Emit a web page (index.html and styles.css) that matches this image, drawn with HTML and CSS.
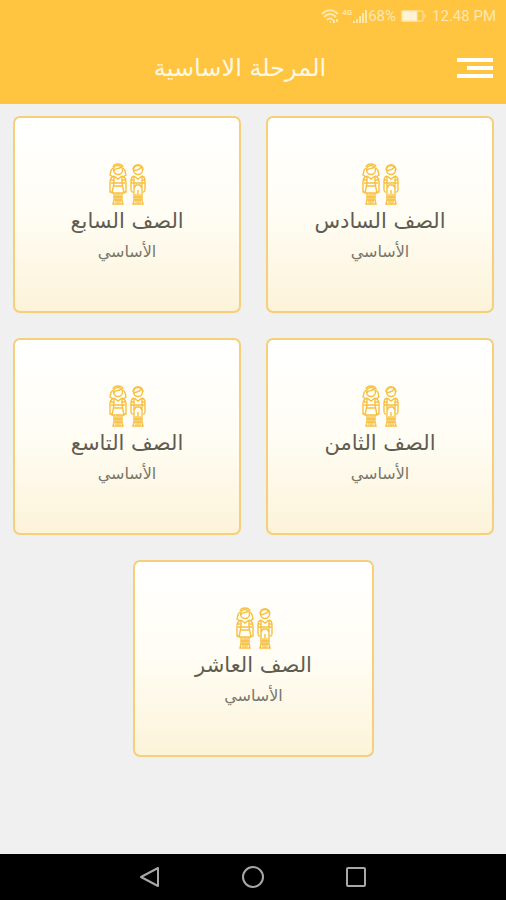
FILE: index.html
```html
<!DOCTYPE html>
<html lang="ar" dir="rtl">
<head>
<meta charset="UTF-8">
<meta name="viewport" content="width=device-width, initial-scale=1">
<title>المرحلة الاساسية</title>
<link rel="stylesheet" href="styles.css">
</head>
<body>
<svg class="sprite" aria-hidden="true">
<symbol id="kids" viewBox="0 0 38 42">
<!-- girl -->
<circle cx="10" cy="7" r="4.5"/>
<path d="M6 8C7 4 11 7 13 4M5 5C2 7 3 10 2 12l3 2M15 5c3 2 2 5 3 7l-3 2M5 4C6 0 14 0 15 4"/>
<path d="M6 13c-3 1-4 3-4 6v10h3M14 13c3 1 4 3 4 6v10h-3M6 13l4 3 4-3M6 14v6h8v-6M6 20L4 30h12l-2-10M6 23h8M3 17h3M14 17h3M3 20h3M14 20h3"/>
<path d="M6 30v7l-1 4h5V30M10 41h5l-1-4v-7M6 34h8M6 37h8M8 31v9M12 31v9"/>
<!-- boy -->
<circle cx="30" cy="7" r="4.5"/>
<path d="M25 7c0-7 10-7 10 0M25 8c4-1 7-1 8-4"/>
<path d="M26 13c-3 1-3 3-3 6v7c0 2 0 3 2 3M34 13c3 1 3 3 3 6v7c0 2 0 3-2 3M26 13l4 3 4-3M26 14v16M34 14v16M26 20h8M23 17h3M34 17h3M23 20h3M34 20h3M26 25l2-3h4l2 3"/>
<path d="M26 30v7l-1 4h5V27M30 41h5l-1-4v-7M26 34h8M26 37h8M28 31v9M32 31v9"/>
</symbol>
</svg>

<header>
<div class="status" dir="ltr">
<svg class="wifi" viewBox="0 0 18 14" aria-hidden="true">
<path d="M1 5c5-5 11-5 16 0M3 8c4-4 8-4 12 0M6 11c2-2 4-2 6 0"/>
<path d="M9 13h1M13 11v3M16 10v3"/>
</svg>
<span class="network">4G</span>
<svg class="signal" viewBox="0 0 16 14" aria-hidden="true">
<path d="M1 12h2v2H1zM4 10h2v4H4zM7 7h2v7H7zM10 4h2v10h-2zM13 1h2v13h-2z"/>
</svg>
<span>68%</span>
<svg class="battery" viewBox="0 0 26 12" aria-hidden="true">
<rect class="charge" x="1" y="1" width="15" height="10"/>
<path d="M1 1h21v10H1zM24 4v4"/>
</svg>
<span>12.48 PM</span>
</div>
<div class="bar">
<button class="menu" type="button" aria-label="القائمة">
<span></span>
<span class="short"></span>
<span></span>
</button>
<h1>المرحلة الاساسية</h1>
</div>
</header>

<main class="grid">
<a class="card" href="#">
<svg class="kids" aria-hidden="true"><use href="#kids"/></svg>
<h2>الصف السادس</h2>
<p>الأساسي</p>
</a>
<a class="card" href="#">
<svg class="kids" aria-hidden="true"><use href="#kids"/></svg>
<h2>الصف السابع</h2>
<p>الأساسي</p>
</a>
<a class="card" href="#">
<svg class="kids" aria-hidden="true"><use href="#kids"/></svg>
<h2>الصف الثامن</h2>
<p>الأساسي</p>
</a>
<a class="card" href="#">
<svg class="kids" aria-hidden="true"><use href="#kids"/></svg>
<h2>الصف التاسع</h2>
<p>الأساسي</p>
</a>
<a class="card last" href="#">
<svg class="kids" aria-hidden="true"><use href="#kids"/></svg>
<h2>الصف العاشر</h2>
<p>الأساسي</p>
</a>
</main>

<nav dir="ltr">
<button type="button" aria-label="رجوع">
<svg viewBox="0 0 24 24"><path d="M20 3v18L3 12z"/></svg>
</button>
<button type="button" aria-label="الرئيسية">
<svg viewBox="0 0 24 24"><circle cx="12" cy="12" r="10"/></svg>
</button>
<button type="button" aria-label="التطبيقات">
<svg viewBox="0 0 24 24"><rect x="3" y="3" width="18" height="18" rx="1"/></svg>
</button>
</nav>
</body>
</html>
```

FILE: styles.css
```css
* {
box-sizing: border-box;
}
body {
margin: 0;
min-height: 100vh;
display: flex;
flex-direction: column;
background-color: #f0f0f0;
font-family: "DejaVu Sans", sans-serif;
}
button {
padding: 0;
border: none;
background: none;
cursor: pointer;
}
.sprite {
display: none;
}

header {
background-color: #ffc440;
color: #fff;
}
.status {
display: flex;
align-items: center;
justify-content: flex-end;
height: 32px;
padding: 0 10px;
font-family: Roboto, sans-serif;
font-size: 15px;
color: #ffe7ae;
}
.status svg {
fill: none;
stroke: #ffe7ae;
stroke-width: 2;
}
.status .wifi {
width: 18px;
height: 14px;
margin-right: 3px;
}
.status .network {
font-size: 8px;
font-weight: bold;
align-self: flex-start;
margin-top: 8px;
}
.status .signal {
width: 16px;
height: 14px;
fill: #ffe7ae;
stroke: none;
}
.status .battery {
width: 26px;
height: 12px;
margin: 0 5px;
stroke-width: 1;
}
.status .charge {
fill: #fff3d6;
}
.bar {
display: grid;
grid-template-columns: 36px 1fr 10px;
align-items: center;
height: 72px;
padding: 0 13px;
}
.bar h1 {
margin: 0;
text-align: center;
font-size: 24px;
line-height: 32px;
font-weight: normal;
color: #fff8e4;
}
.menu {
display: flex;
flex-direction: column;
align-items: flex-start;
gap: 4px;
}
.menu span {
width: 36px;
height: 4px;
background-color: #fff;
}
.menu .short {
width: 26px;
}

.grid {
flex: 1;
display: grid;
grid-template-columns: 1fr 1fr;
align-content: start;
gap: 25px;
padding: 12px 12px 12px 13px;
}
.card {
display: flex;
flex-direction: column;
align-items: center;
justify-content: center;
min-height: 197px;
border: 2px solid #f5cf79;
border-radius: 7px;
background-image: linear-gradient(#fff, #fffdf4 50%, #fcf3d9);
text-decoration: none;
color: #5f5c52;
}
.card.last {
grid-column: 1 / 3;
justify-self: center;
width: 50%;
}
.kids {
width: 38px;
height: 42px;
fill: none;
stroke: #f8c040;
stroke-width: 1.4;
}
.card h2 {
margin: 0;
font-size: 21px;
line-height: 32px;
font-weight: normal;
}
.card p {
margin: 0;
font-size: 16px;
line-height: 30px;
color: #79766b;
}

nav {
display: flex;
align-items: center;
justify-content: center;
gap: 79px;
height: 46px;
background-color: #000;
}
nav button {
height: 24px;
}
nav svg {
width: 24px;
height: 24px;
fill: none;
stroke: #a8a8a8;
stroke-width: 2;
stroke-linejoin: round;
}
```
